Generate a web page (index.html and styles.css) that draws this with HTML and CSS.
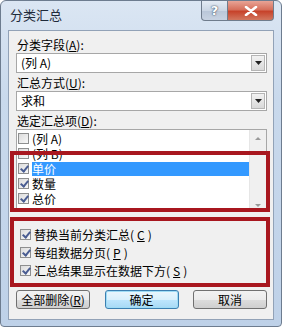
FILE: index.html
```html
<!doctype html>
<html lang="zh-CN">
	<head>
		<meta charset="utf-8">
		<link rel="stylesheet" href="styles.css">
		<title>分类汇总</title>
	</head>
	<body>
	<div class="window">
		<div class="titlebar">
			<span class="title">分类汇总</span>
			<div class="caption-btns">
				<div class="btn-help">?</div>
				<div class="btn-close">
					<svg width="14" height="10" viewBox="0 0 14 10"><path d="M2 1 L12 9 M12 1 L2 9" stroke="#fff" stroke-width="2.6" stroke-linecap="round"/></svg>
				</div>
			</div>
		</div>
		<div class="client">
			<div class="label">分类字段(<u>A</u>):</div>
			<div class="combo">
				<span class="combo-text">(列 A)</span>
				<span class="drop"><svg width="7" height="4" viewBox="0 0 7 4"><path d="M0 0 L7 0 L3.5 4 Z" fill="#222"/></svg></span>
			</div>
			<div class="label">汇总方式(<u>U</u>):</div>
			<div class="combo">
				<span class="combo-text">求和</span>
				<span class="drop"><svg width="7" height="4" viewBox="0 0 7 4"><path d="M0 0 L7 0 L3.5 4 Z" fill="#222"/></svg></span>
			</div>
			<div class="label">选定汇总项(<u>D</u>):</div>
			<div class="listbox">
				<div class="items">
					<div class="item"><span class="cb"></span>(列 A)</div>
					<div class="item"><span class="cb"></span>(列 B)</div>
					<div class="item selected"><span class="cb checked"></span><span class="sel-text">单价</span></div>
					<div class="item"><span class="cb checked"></span>数量</div>
					<div class="item"><span class="cb checked"></span>总价</div>
				</div>
				<div class="scrollbar">
					<span class="arrow up"></span>
					<span class="arrow down"></span>
				</div>
			</div>
			<div class="options">
				<div class="opt"><span class="cb checked"></span>替换当前分类汇总(<u>C</u>)</div>
				<div class="opt"><span class="cb checked"></span>每组数据分页(<u>P</u>)</div>
				<div class="opt"><span class="cb checked"></span>汇总结果显示在数据下方(<u>S</u>)</div>
			</div>
			<div class="buttons">
				<div class="button">全部删除(<u>R</u>)</div>
				<div class="button default">确定</div>
				<div class="button">取消</div>
			</div>
			<div class="mark mark-list"></div>
			<div class="mark mark-opts"></div>
		</div>
	</div>
	</body>
</html>
```

FILE: styles.css
```css
body {
	margin: 0;
	background: #fff;
	font: 12px/16px "Noto Sans CJK SC", "DejaVu Sans", sans-serif;
	color: #000;
}

u {
	text-decoration: underline;
}

.window {
	width: 282px;
	height: 327px;
	box-sizing: border-box;
	background: linear-gradient(180deg, #dbe6f3 0%, #c9d9ec 30%, #bed1e8 100%);
	border: 1px solid #6d7c8f;
	border-radius: 6px 6px 4px 4px;
	display: flex;
	flex-direction: column;
}

.titlebar {
	height: 29px;
	display: flex;
	justify-content: space-between;
	align-items: flex-start;
	padding-left: 9px;
}

.title {
	font-size: 13px;
	line-height: 28px;
	color: #1e2a3a;
}

.caption-btns {
	display: flex;
	margin-right: 7px;
}

.btn-help, .btn-close {
	height: 19px;
	border: 1px solid #6f7c8c;
	border-top: none;
	display: flex;
	align-items: center;
	justify-content: center;
}

.btn-help {
	width: 25px;
	border-radius: 0 0 0 4px;
	background: linear-gradient(180deg, #e4ebf4 0%, #cbd6e4 50%, #b9c6d8 51%, #c8d3e2 100%);
	color: #fff;
	font: bold 13px/1 "DejaVu Sans", sans-serif;
	text-shadow: 0 0 2px #3f4f66, 0 0 1px #3f4f66;
}

.btn-close {
	width: 45px;
	border-left: none;
	border-radius: 0 0 4px 0;
	background: linear-gradient(180deg, #e8a496 0%, #d6705c 45%, #c7432b 55%, #d2775f 100%);
}

.client {
	position: relative;
	margin: 0 7px 6px 7px;
	flex: 1;
	background: #f0f0f0;
	border: 1px solid #92a2b7;
	padding: 5px 6px 0 7px;
}

.label {
	height: 17px;
	line-height: 17px;
	padding-left: 1px;
}

.combo {
	height: 18px;
	border: 1px solid #a7a7a7;
	background: #fff;
	display: flex;
	justify-content: space-between;
	align-items: center;
	margin-bottom: 1px;
}

.combo-text {
	padding-left: 4px;
}

.drop {
	width: 14px;
	height: 16px;
	margin-right: 1px;
	box-sizing: border-box;
	border: 1px solid #b5b5b5;
	background: linear-gradient(180deg, #f2f2f2, #d9d9d9);
	display: flex;
	align-items: center;
	justify-content: center;
}

.listbox {
	height: 80px;
	border: 1px solid #a7a7a7;
	background: #fff;
	display: flex;
	overflow: hidden;
}

.items {
	flex: 1;
	padding-top: 1px;
}

.item {
	height: 15px;
	line-height: 15px;
	display: flex;
	align-items: center;
	padding-left: 1px;
}

.item .cb {
	margin-right: 3px;
}

.sel-text {
	flex: 1;
	background: #3399ff;
	color: #fff;
	height: 14px;
	line-height: 14px;
}

.scrollbar {
	width: 16px;
	background: #f0f0f0;
	border-left: 1px solid #e6e6e6;
	display: flex;
	flex-direction: column;
	justify-content: space-between;
	align-items: center;
	padding: 7px 0 3px;
}

.arrow {
	width: 0;
	height: 0;
	border-left: 3px solid transparent;
	border-right: 3px solid transparent;
}

.arrow.up {
	border-bottom: 3px solid #9a9a9a;
}

.arrow.down {
	border-top: 3px solid #9a9a9a;
}

.cb {
	width: 11px;
	height: 11px;
	box-sizing: border-box;
	border: 1px solid #8e8f8f;
	background: linear-gradient(135deg, #dcdcdc, #f7f7f7);
	flex: none;
	position: relative;
}

.cb.checked::after {
	content: "";
	position: absolute;
	left: 3px;
	top: 0px;
	width: 3px;
	height: 6px;
	border: solid #4a5d92;
	border-width: 0 2px 2px 0;
	transform: rotate(40deg);
}

.options {
	padding: 15px 0 0 4px;
	height: 61px;
}

.opt {
	height: 17px;
	display: flex;
	align-items: center;
	gap: 3px;
	margin-bottom: 1px;
}

.buttons {
	display: flex;
	justify-content: space-between;
	margin-top: 3px;
}

.button {
	height: 17px;
	line-height: 17px;
	border: 1px solid #707070;
	border-radius: 3px;
	background: linear-gradient(180deg, #f2f2f2 0%, #ebebeb 50%, #dddddd 51%, #cfcfcf 100%);
	text-align: center;
	width: 72px;
}

.button.default {
	border-color: #3c7fb1;
	box-shadow: inset 0 0 0 1px #9fdcf5;
	background: linear-gradient(180deg, #eaf6fd 0%, #d9f0fc 50%, #bee6fd 51%, #a7d9f5 100%);
}

.mark {
	position: absolute;
	border: 4px solid #a8171f;
	box-sizing: border-box;
}

.mark-list {
	left: 1px;
	top: 120px;
	width: 260px;
	height: 61px;
}

.mark-opts {
	left: 1px;
	top: 186px;
	width: 260px;
	height: 70px;
}
```
